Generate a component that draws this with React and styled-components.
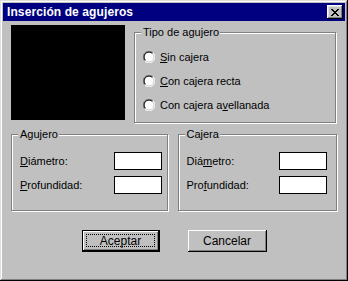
import React from 'react';
import styled, { createGlobalStyle } from 'styled-components';

const GlobalStyle = createGlobalStyle`
  html, body {
    margin: 0;
    padding: 0;
    background: #c0c0c0;
  }
  body {
    font-family: "Liberation Sans", Arial, sans-serif;
    font-size: 11px;
    color: #000;
  }
`;

const Window = styled.div`
  box-sizing: border-box;
  width: 348px;
  height: 281px;
  background: #c0c0c0;
  padding: 3px;
  box-shadow: inset -1px -1px 0 #000, inset 1px 1px 0 #dfdfdf,
    inset -2px -2px 0 #808080, inset 2px 2px 0 #fff;
  display: flex;
  flex-direction: column;
`;

const TitleBar = styled.div`
  height: 18px;
  background: #000080;
  display: flex;
  align-items: center;
  justify-content: space-between;
  padding: 0 2px 0 4px;
`;

const Title = styled.span`
  color: #fff;
  font-weight: bold;
  font-size: 12px;
  letter-spacing: 0.1px;
`;

const CloseButton = styled.div`
  box-sizing: border-box;
  width: 16px;
  height: 14px;
  background: #c0c0c0;
  box-shadow: inset -1px -1px 0 #000, inset 1px 1px 0 #fff,
    inset -2px -2px 0 #808080, inset 2px 2px 0 #dfdfdf;
  display: flex;
  align-items: center;
  justify-content: center;
`;

const Body = styled.div`
  padding: 4px 8px 0 8px;
  display: flex;
  flex-direction: column;
`;

const TopRow = styled.div`
  display: flex;
  align-items: flex-start;
  gap: 9px;
`;

const Preview = styled.div`
  width: 114px;
  height: 95px;
  background: #000;
`;

const Group = styled.div`
  position: relative;
  box-sizing: border-box;
  width: ${p => p.$w}px;
  height: ${p => p.$h}px;
  margin-top: ${p => p.$top || 0}px;
  border: 1px solid #808080;
  box-shadow: inset 1px 1px 0 #fff, 1px 1px 0 #fff;
`;

const Legend = styled.span`
  position: absolute;
  top: -7px;
  left: 6px;
  padding: 0 1px 0 2px;
  background: #c0c0c0;
  line-height: 13px;
`;

const RadioList = styled.div`
  display: flex;
  flex-direction: column;
  padding: 17px 0 0 8px;
  gap: 11px;
`;

const RadioRow = styled.div`
  display: flex;
  align-items: center;
  gap: 5px;
  height: 13px;
`;

const BottomRow = styled.div`
  display: flex;
  gap: 10px;
  margin-top: 11px;
`;

const FieldList = styled.div`
  display: flex;
  flex-direction: column;
  gap: 6px;
  padding: 17px 0 0 8px;
`;

const FieldRow = styled.div`
  display: flex;
  align-items: center;
  justify-content: space-between;
  padding-right: ${p => p.$pr}px;
`;

const Input = styled.div`
  box-sizing: border-box;
  width: 48px;
  height: 18px;
  background: #fff;
  border-top: 1px solid #000;
  border-left: 1px solid #000;
  border-right: 1px solid #000;
  border-bottom: 1px solid #000;
`;

const Key = styled.span`
  text-decoration: underline;
`;

const ButtonRow = styled.div`
  display: flex;
  justify-content: center;
  gap: 28px;
  margin-top: 19px;
`;

const Button = styled.div`
  box-sizing: border-box;
  width: ${p => (p.$default ? 78 : 79)}px;
  height: ${p => (p.$default ? 22 : 22)}px;
  display: flex;
  align-items: center;
  justify-content: center;
  background: #c0c0c0;
  font-size: 12px;
  position: relative;
  box-shadow: ${p =>
    p.$default
      ? 'inset 0 0 0 1px #000, inset -2px -2px 0 #000, inset 2px 2px 0 #fff, inset -3px -3px 0 #808080'
      : 'inset -1px -1px 0 #000, inset 1px 1px 0 #fff, inset -2px -2px 0 #808080'};
`;

const Focus = styled.span`
  position: absolute;
  inset: 4px 5px 5px 4px;
  border: 1px dotted #000;
`;

const Radio = () => (
  <svg width="12" height="12" viewBox="0 0 12 12">
    <circle cx="6" cy="6" r="4.5" fill="#fff" />
    <path d="M1.8 10.2 A5.5 5.5 0 0 1 10.2 1.8" stroke="#808080" fill="none" />
    <path d="M10.2 1.8 A5.5 5.5 0 0 1 1.8 10.2" stroke="#fff" fill="none" />
    <path d="M2.5 9.5 A4.5 4.5 0 0 1 9.5 2.5" stroke="#000" fill="none" />
    <path d="M9.5 2.5 A4.5 4.5 0 0 1 2.5 9.5" stroke="#dfdfdf" fill="none" />
  </svg>
);

const CloseIcon = () => (
  <svg width="8" height="7" viewBox="0 0 8 7">
    <path d="M0 0h2v1h1v1h2V1h1V0h2v1H7v1H6v1H5v1h1v1h1v1h1v1H6V6H5V5H3v1H2v1H0V6h1V5h1V4h1V3H2V2H1V1H0z" fill="#000" />
  </svg>
);

const App = () => {
  return (
    <>
      <GlobalStyle />
      <Window>
        <TitleBar>
          <Title>Inserción de agujeros</Title>
          <CloseButton>
            <CloseIcon />
          </CloseButton>
        </TitleBar>
        <Body>
          <TopRow>
            <Preview />
            <Group $w={202} $h={91} $top={7}>
              <Legend>Tipo de agujero</Legend>
              <RadioList>
                <RadioRow>
                  <Radio />
                  <span><Key>S</Key>in cajera</span>
                </RadioRow>
                <RadioRow>
                  <Radio />
                  <span><Key>C</Key>on cajera recta</span>
                </RadioRow>
                <RadioRow>
                  <Radio />
                  <span>Con cajera a<Key>v</Key>ellanada</span>
                </RadioRow>
              </RadioList>
            </Group>
          </TopRow>
          <BottomRow>
            <Group $w={157} $h={77}>
              <Legend>Agujero</Legend>
              <FieldList>
                <FieldRow $pr={5}>
                  <span><Key>D</Key>iámetro:</span>
                  <Input />
                </FieldRow>
                <FieldRow $pr={5}>
                  <span><Key>P</Key>rofundidad:</span>
                  <Input />
                </FieldRow>
              </FieldList>
            </Group>
            <Group $w={160} $h={77}>
              <Legend>Cajera</Legend>
              <FieldList>
                <FieldRow $pr={9}>
                  <span>Diá<Key>m</Key>etro:</span>
                  <Input />
                </FieldRow>
                <FieldRow $pr={9}>
                  <span>Pro<Key>f</Key>undidad:</span>
                  <Input />
                </FieldRow>
              </FieldList>
            </Group>
          </BottomRow>
          <ButtonRow>
            <Button $default>
              <Focus />
              Aceptar
            </Button>
            <Button>Cancelar</Button>
          </ButtonRow>
        </Body>
      </Window>
    </>
  );
};

export default App;
